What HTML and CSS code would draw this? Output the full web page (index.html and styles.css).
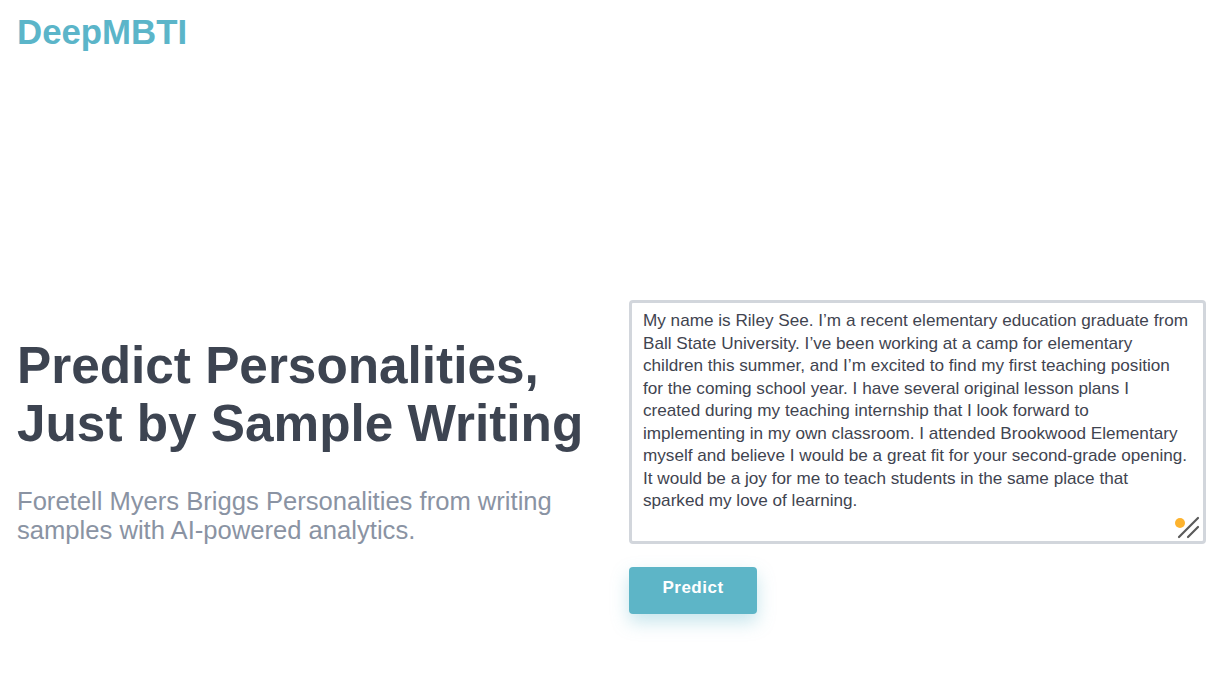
FILE: index.html
```html
<!DOCTYPE html>
<html lang="en">
<head>
<meta charset="utf-8">
<title>DeepMBTI</title>
<link rel="stylesheet" href="styles.css">
</head>
<body>
<header class="header">
  <div class="logo">DeepMBTI</div>
</header>
<main class="hero">
  <section class="intro">
    <h1 class="title">Predict Personalities,<br>Just by Sample Writing</h1>
    <p class="subtitle">Foretell Myers Briggs Personalities from writing samples with AI-powered analytics.</p>
  </section>
  <section class="form">
    <div class="field">
      <textarea class="sample">My name is Riley See. I’m a recent elementary education graduate from Ball State University. I’ve been working at a camp for elementary children this summer, and I’m excited to find my first teaching position for the coming school year. I have several original lesson plans I created during my teaching internship that I look forward to implementing in my own classroom. I attended Brookwood Elementary myself and believe I would be a great fit for your second-grade opening. It would be a joy for me to teach students in the same place that sparked my love of learning.</textarea>
      <span class="dot"></span>
      <svg class="grip" width="26" height="26" viewBox="0 0 26 26"><line x1="3" y1="23" x2="22" y2="4" stroke="#5a5a5a" stroke-width="2.2" stroke-linecap="round"/><line x1="12" y1="23" x2="22" y2="13" stroke="#5a5a5a" stroke-width="2.2" stroke-linecap="round"/></svg>
    </div>
    <button class="predict" type="button">Predict</button>
  </section>
</main>
</body>
</html>
```
FILE: styles.css
```css
* { box-sizing: border-box; }
html, body { margin: 0; padding: 0; background: #fff; }
body {
  font-family: "Liberation Sans", Arial, sans-serif;
  width: 1228px;
  height: 678px;
  overflow: hidden;
}
.header {
  padding: 12px 17px 0;
  height: 60px;
}
.logo {
  font-size: 34.8px;
  font-weight: 700;
  color: #5bb5c9;
  line-height: 40px;
}
.hero {
  display: grid;
  grid-template-columns: 612px 577px;
  padding: 0 22px 0 17px;
  margin-top: 240px;
  align-items: start;
}
.intro { padding-top: 37px; }
.title {
  margin: 0;
  font-size: 51.3px;
  line-height: 58px;
  font-weight: 700;
  color: #3d4451;
}
.subtitle {
  margin: 34px 0 0;
  font-size: 25.6px;
  line-height: 28.5px;
  color: #8a93a3;
  max-width: 560px;
}
.field { position: relative; }
.sample {
  display: block;
  width: 577px;
  height: 244px;
  border: 3px solid #d2d6dc;
  border-radius: 4px;
  padding: 6px 14px 9px 11px;
  font-family: "Liberation Sans", Arial, sans-serif;
  font-size: 17.15px;
  line-height: 22.5px;
  color: #3f4450;
  resize: none;
  outline: none;
  background: #fff;
}
.dot {
  position: absolute;
  left: 546px;
  top: 218px;
  width: 10px;
  height: 10px;
  border-radius: 50%;
  background: #fdb32e;
}
.grip {
  position: absolute;
  left: 547px;
  top: 214px;
}
.predict {
  margin-top: 23px;
  width: 128px;
  height: 47px;
  border: 0;
  border-radius: 4px;
  background: #5db5c7;
  color: #fff;
  font-family: "Liberation Sans", Arial, sans-serif;
  font-size: 17px;
  font-weight: 700;
  letter-spacing: 0.5px;
  box-shadow: 0 8px 18px rgba(91, 181, 201, 0.35);
  padding: 0 0 6px;
}
```
